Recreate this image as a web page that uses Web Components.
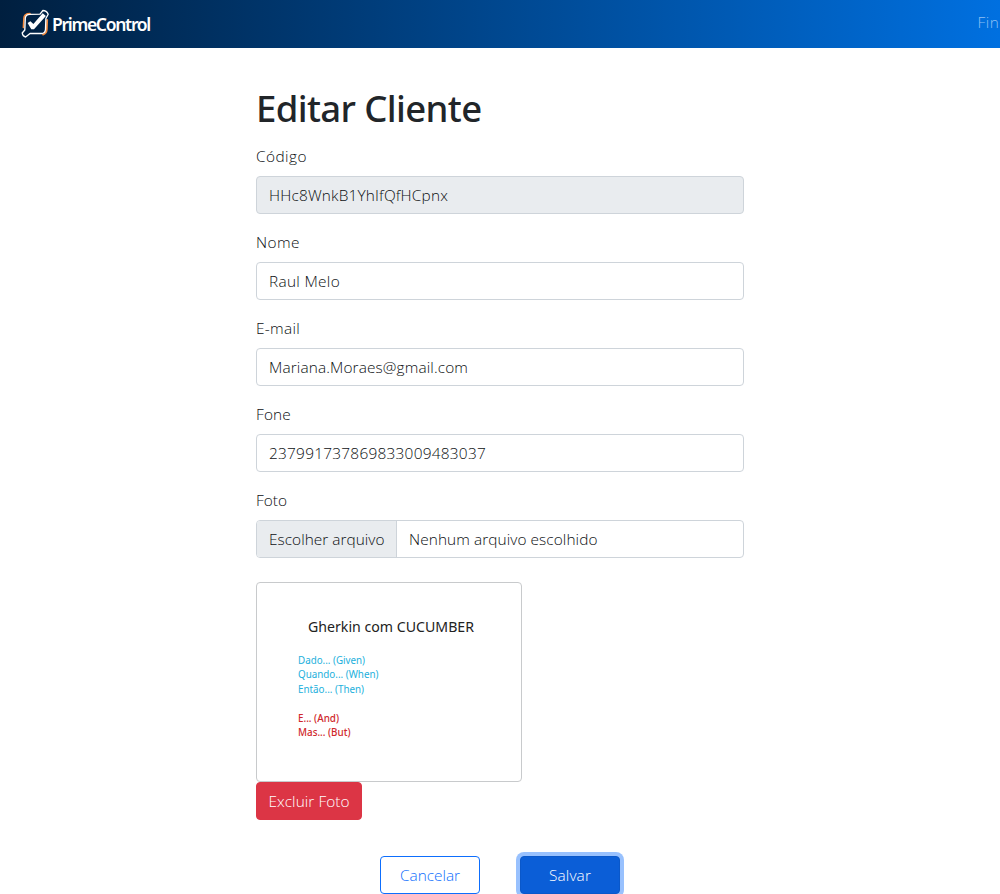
<!DOCTYPE html>
<html lang="pt-BR">
<head>
<meta charset="utf-8">
<title>Editar Cliente</title>
<style>
html,body{margin:0;height:894px;overflow:hidden;background:#fff;color:#0c0f12;font:300 15.4px/25px "Open Sans","Noto Sans",sans-serif}
</style>
</head>
<body>
<client-page></client-page>
<script>
const define = (name, html, setup) => customElements.define(name, class extends HTMLElement {
  connectedCallback() {
    if (this.shadowRoot) return;
    const t = document.createElement('template');
    t.innerHTML = html;
    this.attachShadow({mode: 'open'}).append(t.content.cloneNode(true));
    if (setup) setup(this, this.shadowRoot);
  }
});

// Single line of text, tracked so that it spans the requested width
define('fit-text', `<style>:host{display:inline-block;white-space:nowrap}span{display:inline-block}</style><span><slot></slot></span>`, (el, root) => {
  const s = root.querySelector('span');
  const n = el.textContent.length;
  const w = s.getBoundingClientRect().width;
  const target = +el.getAttribute('w');
  s.style.letterSpacing = (target - w) / n + 'px';
});

define('brand-logo', `<style>
:host{display:flex;height:32px;color:#fff}
svg{display:block;flex:none}
.name{margin-left:1px;font:600 17.500px/32px "Noto Sans",sans-serif}
</style>
<svg width="30" height="32" viewBox="0 0 30 32">
  <g fill="none" stroke-linecap="round" stroke-linejoin="round">
    <path d="M9 5.600Q3 5.600 2.900 10.500L2.400 19.500" stroke="#f58a3c" stroke-width="1.600"/>
    <path d="M26.200 12L25.800 21.500Q25.500 25.500 22 26.600" stroke="#f58a3c" stroke-width="1.800"/>
    <path d="M19 6.100L21.900 2.500Q25.500 2.500 27.200 6.200L24.900 10.500L24.500 21.500Q24 25.500 20.500 25.500H9L4.600 29Q1.700 28.500 1.200 25L3.800 22L4.300 10Q4.800 6.300 9 6.300Z" stroke="#fff" stroke-width="1.350"/>
  </g>
  <path d="M6.600 15L9.400 13.200L12.400 16L21.700 5.200L24.900 7.900L13 21.200H10.300Z" fill="#fff"/>
</svg><div class="name"><fit-text w="98">PrimeControl</fit-text></div>`);

define('top-bar', `<style>
:host{display:flex;height:48px;box-sizing:border-box;padding:8px 0 0 21px;justify-content:space-between;background:linear-gradient(90deg,#001f3f,#0070e0)}
.menu{flex:none;width:22.500px;color:#8fc0f4;white-space:nowrap;line-height:29px}
</style><brand-logo></brand-logo><div class="menu"><fit-text w="22">Fin</fit-text></div>`);

define('form-field', `<style>
:host{display:block;margin-bottom:16px}
label{display:block;height:24px;margin-bottom:8px}
.box{display:flex;box-sizing:border-box;height:38px;border:1px solid #ced4da;border-radius:4px;line-height:37px;padding-left:12px;overflow:hidden}
:host([disabled]) .box{background:#e9ecef}
:host([file]) .box{padding:0}
</style><label><slot name="label"></slot></label><div class="box"><slot></slot></div>`);

define('file-picker', `<style>
:host{display:flex}
.b{box-sizing:border-box;width:140px;padding-left:12px;background:#e9ecef;border-right:1px solid #ced4da}
.n{padding-left:12px}
</style><div class="b"><fit-text w="115.500">Escolher arquivo</fit-text></div><div class="n"><fit-text w="188.500">Nenhum arquivo escolhido</fit-text></div>`);

define('client-photo', `<style>
:host{display:block;box-sizing:border-box;width:266px;height:200px;border:1px solid #c8cacc;border-radius:4px;overflow:hidden}
svg{display:block}
text{font-family:"Noto Sans",sans-serif}
</style><svg width="264" height="198" viewBox="257 583 264 198">
<text x="308" y="632" textLength="166" lengthAdjust="spacingAndGlyphs" font-size="15.200" font-weight="400" fill="#222">Gherkin com CUCUMBER</text>
<g font-size="10.600" font-weight="400" fill="#22b0dc">
<text x="298" y="663.500" textLength="67" lengthAdjust="spacingAndGlyphs">Dado... (Given)</text>
<text x="298" y="678" textLength="80.500" lengthAdjust="spacingAndGlyphs">Quando... (When)</text>
<text x="298" y="692.500" textLength="66" lengthAdjust="spacingAndGlyphs">Então... (Then)</text></g>
<g font-size="10.600" font-weight="500" fill="#d0282c">
<text x="298" y="721.500" textLength="41" lengthAdjust="spacingAndGlyphs">E... (And)</text>
<text x="298" y="736" textLength="52.500" lengthAdjust="spacingAndGlyphs">Mas... (But)</text></g>
</svg>`);

define('action-button', `<style>
:host{display:block}
button{display:block;width:100px;height:38px;box-sizing:border-box;margin:0;padding:0;border:1px solid #0d6efd;border-radius:4px;background:#fff;color:#0d6efd;font:inherit;line-height:37px}
:host([kind=danger]) button{width:106px;background:#dc3545;border-color:#dc3545;color:#fff}
:host([kind=primary]) button{background:#0b5ed7;border-color:#0a58ca;color:#fff;box-shadow:0 0 0 4px #98c1fe}
</style><button type="button"><slot></slot></button>`);

define('client-page', `<style>
:host{display:block;height:894px;overflow:hidden}
main{width:488px;margin:40px auto 0}
h1{margin:0 0 8px;height:48px;line-height:41px;font-size:36.500px;font-weight:500;color:#212529;font-family:"Noto Sans",sans-serif}
form-field[file]{margin-bottom:24px}
.actions{display:flex;justify-content:center;gap:40px;margin-top:36px}
</style>
<top-bar></top-bar>
<main>
<h1><fit-text w="225.500">Editar Cliente</fit-text></h1>
<form-field disabled><fit-text slot="label" w="51">Código</fit-text><fit-text w="179">HHc8WnkB1YhIfQfHCpnx</fit-text></form-field>
<form-field><fit-text slot="label" w="44">Nome</fit-text><fit-text w="71">Raul Melo</fit-text></form-field>
<form-field><fit-text slot="label" w="44">E-mail</fit-text><fit-text w="199">Mariana.Moraes@gmail.com</fit-text></form-field>
<form-field><fit-text slot="label" w="35">Fone</fit-text><fit-text w="217">237991737869833009483037</fit-text></form-field>
<form-field file><fit-text slot="label" w="31">Foto</fit-text><file-picker></file-picker></form-field>
<client-photo></client-photo>
<action-button kind="danger"><fit-text w="81">Excluir Foto</fit-text></action-button>
<div class="actions"><action-button><fit-text w="60">Cancelar</fit-text></action-button><action-button kind="primary"><fit-text w="42">Salvar</fit-text></action-button></div>
</main>`);
</script>
</body>
</html>
